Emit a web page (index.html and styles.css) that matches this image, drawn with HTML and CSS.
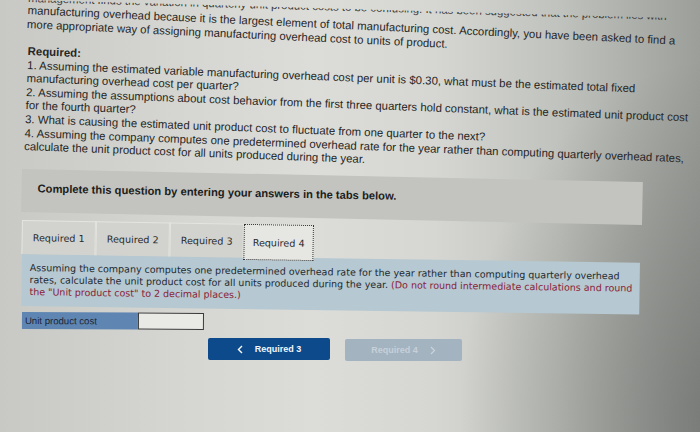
FILE: index.html
```html
<!DOCTYPE html>
<html lang="en">
<head>
<meta charset="utf-8">
<title>Required 4</title>
<link rel="stylesheet" href="styles.css">
</head>
<body>
<div class="page">
  <div class="question">
    <div class="cut"><span>management finds the variation in quarterly unit product costs to be confusing. It has been suggested that the problem lies with</span></div>
    <p class="intro">manufacturing overhead because it is the largest element of total manufacturing cost. Accordingly, you have been asked to find a<br>more appropriate way of assigning manufacturing overhead cost to units of product.</p>
    <p class="required">
      <strong>Required:</strong><br>
      1. Assuming the estimated variable manufacturing overhead cost per unit is $0.30, what must be the estimated total fixed<br>
      manufacturing overhead cost per quarter?<br>
      2. Assuming the assumptions about cost behavior from the first three quarters hold constant, what is the estimated unit product cost<br>
      for the fourth quarter?<br>
      3. What is causing the estimated unit product cost to fluctuate from one quarter to the next?<br>
      4. Assuming the company computes one predetermined overhead rate for the year rather than computing quarterly overhead rates,<br>
      calculate the unit product cost for all units produced during the year.
    </p>
  </div>

  <div class="complete">Complete this question by entering your answers in the tabs below.</div>

  <div class="tabs">
    <div class="tab">Required 1</div>
    <div class="tab">Required 2</div>
    <div class="tab">Required 3</div>
    <div class="tab active">Required 4</div>
  </div>

  <div class="panel">Assuming the company computes one predetermined overhead rate for the year rather than computing quarterly overhead<br>rates, calculate the unit product cost for all units produced during the year. <span class="note">(Do not round intermediate calculations and round<br>the "Unit product cost" to 2 decimal places.)</span></div>

  <div class="answer">
    <div class="label">Unit product cost</div>
    <div class="input"></div>
  </div>

  <div class="nav">
    <div class="btn prev"><svg width="6" height="9" viewBox="0 0 6 9"><path d="M5 1 L1.5 4.5 L5 8" fill="none" stroke="#fff" stroke-width="1.4"/></svg><span>Required 3</span></div>
    <div class="btn next"><span>Required 4</span><svg width="6" height="9" viewBox="0 0 6 9"><path d="M1 1 L4.5 4.5 L1 8" fill="none" stroke="#c9d3dc" stroke-width="1.2"/></svg></div>
  </div>
</div>
</body>
</html>
```
FILE: styles.css
```css
html, body {
  margin: 0;
  padding: 0;
  height: 100%;
}
body {
  width: 700px;
  height: 432px;
  overflow: hidden;
  background:
    radial-gradient(ellipse 260px 360px at 720px 420px, rgba(90, 92, 90, 0.55), rgba(90, 92, 90, 0) 100%),
    linear-gradient(90deg, #c8c9c4 0%, #d5d6d1 25%, #dcddd9 45%, #d6d7d2 62%, #c0c2bd 80%, #9c9e9a 100%);
  font-family: "Liberation Sans", Arial, sans-serif;
  color: #262626;
}
.page {
  padding: 0 0 0 28px;
}
.cut {
  height: 5px;
  overflow: hidden;
  transform: rotate(1.6deg);
  transform-origin: 0 0;
  font-size: 11.4px;
  line-height: 13.6px;
  white-space: nowrap;
  color: #3a3a3a;
}
.cut span {
  display: block;
  margin-top: -8px;
}
.question p {
  margin: 0;
  font-size: 11.4px;
  line-height: 13.6px;
  white-space: nowrap;
  transform-origin: 0 0;
}
.intro {
  margin-top: -1.5px !important;
  transform: rotate(2.7deg);
}
.required {
  margin-top: 14px !important;
  transform: rotate(2.2deg);
}
.required strong {
  font-weight: bold;
}
.complete {
  margin: 16px 0 0 -6px;
  width: 621px;
  height: 43px;
  box-sizing: border-box;
  padding: 13px 0 0 16px;
  background: #c3c4bf;
  font-weight: bold;
  font-size: 11.2px;
  white-space: nowrap;
  color: #1c1c1c;
  transform: rotate(1.2deg);
  transform-origin: 0 0;
}
.tabs {
  display: flex;
  margin: 8px 0 0 -6px;
  transform: rotate(1deg);
  transform-origin: 0 0;
  position: relative;
  z-index: 1;
  height: 34px;
}
.tab {
  width: 74px;
  height: 34px;
  box-sizing: border-box;
  border: 1px solid #e4e4e0;
  border-bottom: none;
  background: #d2d3ce;
  font-family: "DejaVu Sans", Verdana, sans-serif;
  font-size: 9.6px;
  color: #2a2a2a;
  display: flex;
  align-items: center;
  justify-content: center;
}
.tab.active {
  width: 70px;
  height: 36px;
  background: #e6e7e3;
  border: 1px dotted #333;
}
.panel {
  margin: 0 0 0 -6px;
  width: 618px;
  height: 52px;
  box-sizing: border-box;
  padding: 8px 0 0 8px;
  background: #b6c8d1;
  font-family: "DejaVu Sans", Verdana, sans-serif;
  font-size: 9.5px;
  line-height: 12px;
  white-space: nowrap;
  color: #1e2a30;
  transform: rotate(0.8deg);
  transform-origin: 0 0;
}
.note {
  color: #8a2236;
}
.answer {
  display: flex;
  margin: 6px 0 0 -6px;
  height: 17px;
  transform: rotate(0.3deg);
  transform-origin: 0 0;
}
.label {
  width: 116px;
  background: #5f86b3;
  font-size: 9.6px;
  color: #1a2536;
  padding: 0 0 0 3px;
  box-sizing: border-box;
  white-space: nowrap;
  display: flex;
  align-items: center;
}
.input {
  width: 66px;
  box-sizing: border-box;
  border: 1px solid #3a3a3a;
  background: #e9e9e5;
}
.nav {
  display: flex;
  gap: 15px;
  margin: 9px 0 0 180px;
}
.btn {
  height: 22px;
  border-radius: 2px;
  display: flex;
  align-items: center;
  justify-content: center;
  gap: 12px;
  font-weight: bold;
  font-size: 9px;
}
.btn.prev {
  width: 122px;
  background: #0c4a8c;
  color: #f4f6fa;
}
.btn.next {
  width: 117px;
  background: #a3b3c0;
  color: #c6d0d9;
  margin-top: 1px;
}
```
